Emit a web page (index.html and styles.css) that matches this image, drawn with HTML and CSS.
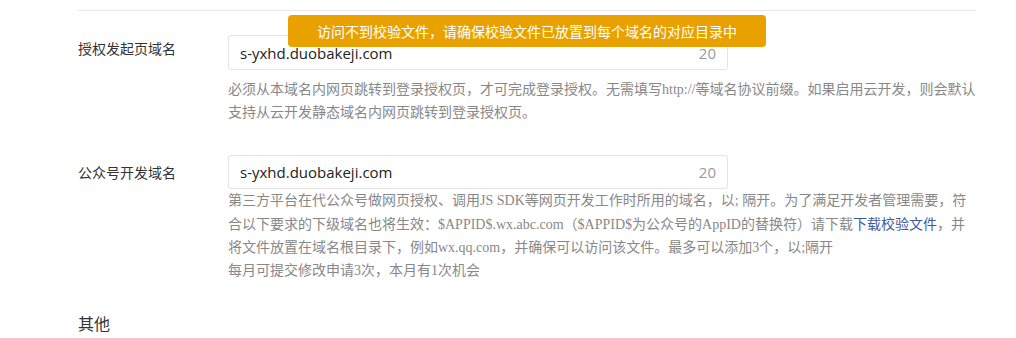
FILE: index.html
```html
<!DOCTYPE html>
<html lang="zh-CN">
<head>
  <meta charset="UTF-8">
  <title>开发设置</title>
  <link rel="stylesheet" href="styles.css">
</head>
<body>
  <!-- TOAST -->
  <div class="toast">访问不到校验文件，请确保校验文件已放置到每个域名的对应目录中</div>

  <div class="page">
    <div class="divider"></div>

    <!-- 授权发起页域名 -->
    <div class="form-row first-row">
      <div class="form-label label-top">授权发起页域名</div>
      <div class="form-field">
        <div class="input-box">
          <span class="input-value">s-yxhd.duobakeji.com</span>
          <span class="input-count">20</span>
        </div>
        <div class="help-text help-gap">
          必须从本域名内网页跳转到登录授权页，才可完成登录授权。无需填写http://等域名协议前缀。如果启用云开发，则会默认<br>
          支持从云开发静态域名内网页跳转到登录授权页。
        </div>
      </div>
    </div>

    <!-- 公众号开发域名 -->
    <div class="form-row second-row">
      <div class="form-label label-mid">公众号开发域名</div>
      <div class="form-field">
        <div class="input-box input-short">
          <span class="input-value">s-yxhd.duobakeji.com</span>
          <span class="input-count">20</span>
        </div>
        <div class="help-text">
          第三方平台在代公众号做网页授权、调用JS SDK等网页开发工作时所用的域名，以; 隔开。为了满足开发者管理需要，符<br>
          合以下要求的下级域名也将生效：$APPID$.wx.abc.com（$APPID$为公众号的AppID的替换符）请下载<a class="help-link" href="#">下载校验文件</a>，并<br>
          将文件放置在域名根目录下，例如wx.qq.com，并确保可以访问该文件。最多可以添加3个，以;隔开
        </div>
        <div class="help-text">每月可提交修改申请3次，本月有1次机会</div>
      </div>
    </div>

    <!-- 其他 -->
    <div class="section-title">其他</div>
  </div>
</body>
</html>
```

FILE: styles.css
```css
body {
  margin: 0;
  padding: 0;
  background: #fff;
  font-family: "Noto Sans CJK SC", "Noto Sans", sans-serif;
  color: #333;
  font-size: 14px;
}

/* PAGE */
.page {
  width: 898px;
  padding: 10px 0 0 78px;
}

.divider {
  border-top: 1px solid #e7e7e7;
}

/* TOAST */
.toast {
  position: absolute;
  left: 288px;
  top: 15px;
  width: 478px;
  height: 32px;
  line-height: 32px;
  border-radius: 4px;
  background: #e9a100;
  color: #fff;
  font-size: 14px;
  text-align: center;
  white-space: nowrap;
}

/* FORM ROWS */
.form-row {
  display: flex;
}

.first-row {
  margin-top: 24px;
}

.second-row {
  margin-top: 31px;
}

.form-label {
  width: 150px;
  flex-shrink: 0;
  font-size: 14px;
  color: #333;
}

.label-top {
  line-height: 26px;
}

.label-mid {
  line-height: 34px;
}

.form-field {
  flex: 1;
}

/* INPUT */
.input-box {
  width: 498px;
  height: 33px;
  border: 1px solid #e4e4e4;
  border-radius: 3px;
  display: flex;
  align-items: center;
  justify-content: space-between;
  padding: 0 11px;
  box-sizing: content-box;
  width: 476px;
}

.input-short {
  height: 32px;
}

.input-value {
  font-family: "Open Sans", "Liberation Sans", sans-serif;
  font-size: 15px;
  color: #222;
}

.input-count {
  font-family: "Open Sans", "Liberation Sans", sans-serif;
  font-size: 15px;
  color: #9a9a9a;
}

/* HELP TEXT */
.help-text {
  font-family: "Liberation Serif", "Noto Sans CJK SC", serif;
  font-size: 14px;
  line-height: 23px;
  color: #888;
  white-space: nowrap;
}

.help-gap {
  margin-top: 8px;
}

.help-link {
  color: #3f5a9a;
  text-decoration: none;
  font-family: "Noto Sans CJK SC", sans-serif;
}

/* SECTION */
.section-title {
  margin-top: 29px;
  font-size: 16px;
  line-height: 24px;
  color: #333;
}
```
